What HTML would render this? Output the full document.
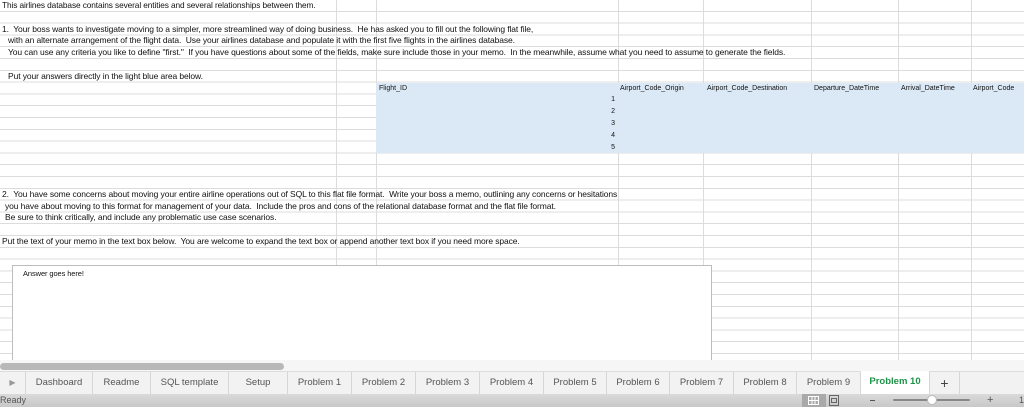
<!DOCTYPE html>
<html><head><meta charset="utf-8"><style>
*{margin:0;padding:0;box-sizing:border-box}
body{width:1024px;height:407px;overflow:hidden;background:#fff;font-family:"Liberation Sans",sans-serif;position:relative}
#grid{position:absolute;left:0;top:0;width:1024px;height:360px;
background-image:repeating-linear-gradient(to bottom,transparent 0,transparent 10.8px,#dcdcdc 10.8px,#dcdcdc 11.8px);}
.v{position:absolute;top:0;height:360px;width:1px;background:#dcdcdc}
.blue{position:absolute;left:376px;top:82.6px;width:648px;height:70.8px;background:#dbe9f6}
.t{position:absolute;font-size:8.5px;color:#111;white-space:nowrap;line-height:11.8px;letter-spacing:-0.1px}
.h{font-size:7px;letter-spacing:0}
.n{position:absolute;font-size:7px;color:#111;line-height:11.8px;left:605px;width:10px;text-align:right}
#box{position:absolute;left:12px;top:265px;width:700px;height:96px;background:#fff;border:1px solid #bdbdbd}
#scroll{position:absolute;left:0;top:360px;width:1024px;height:11px;background:#f6f6f6}
#thumb{position:absolute;left:0;top:363px;width:284px;height:7px;background:#b8b8b8;border-radius:4px}
#tabs{position:absolute;left:0;top:371px;width:1024px;height:23px;background:#f2f2f2;border-top:1px solid #ddd}
.tab{position:absolute;top:0;height:22px;font-size:9.5px;color:#555;line-height:22px;text-align:center;border-right:1px solid #d6d6d6}
#status{position:absolute;left:0;top:394px;width:1024px;height:13px;background:linear-gradient(#dadada,#c8c8c8);font-size:9px;color:#555}
</style></head><body>
<div id="grid"></div>
<div class="v" style="left:336px"></div>
<div class="v" style="left:376px"></div>
<div class="v" style="left:618px"></div>
<div class="v" style="left:703px"></div>
<div class="v" style="left:811px"></div>
<div class="v" style="left:898px"></div>
<div class="v" style="left:971px"></div>
<div class="blue"></div>
<div class="t" style="left:2px;top:0;font-size:8.3px">This airlines database contains several entities and several relationships between them.</div>
<div class="t" style="left:2px;top:23.6px">1.&nbsp; Your boss wants to investigate moving to a simpler, more streamlined way of doing business.&nbsp; He has asked you to fill out the following flat file,</div>
<div class="t" style="left:8px;top:35.4px">with an alternate arrangement of the flight data.&nbsp; Use your airlines database and populate it with the first five flights in the airlines database.</div>
<div class="t" style="left:8px;top:47.2px">You can use any criteria you like to define "first."&nbsp; If you have questions about some of the fields, make sure include those in your memo.&nbsp; In the meanwhile, assume what you need to assume to generate the fields.</div>
<div class="t" style="left:8px;top:70.8px">Put your answers directly in the light blue area below.</div>
<div class="t h" style="left:379px;top:82.6px">Flight_ID</div>
<div class="t h" style="left:620px;top:82.6px">Airport_Code_Origin</div>
<div class="t h" style="left:707px;top:82.6px">Airport_Code_Destination</div>
<div class="t h" style="left:814px;top:82.6px">Departure_DateTime</div>
<div class="t h" style="left:901px;top:82.6px">Arrival_DateTime</div>
<div class="t h" style="left:973px;top:82.6px">Airport_Code</div>
<div class="n" style="top:94.4px">1</div>
<div class="n" style="top:106.2px">2</div>
<div class="n" style="top:118px">3</div>
<div class="n" style="top:129.8px">4</div>
<div class="n" style="top:141.6px">5</div>
<div class="t" style="left:2px;top:188.8px">2.&nbsp; You have some concerns about moving your entire airline operations out of SQL to this flat file format.&nbsp; Write your boss a memo, outlining any concerns or hesitations</div>
<div class="t" style="left:5px;top:200.6px">you have about moving to this format for management of your data.&nbsp; Include the pros and cons of the relational database format and the flat file format.</div>
<div class="t" style="left:5px;top:212.4px">Be sure to think critically, and include any problematic use case scenarios.</div>
<div class="t" style="left:2px;top:236px">Put the text of your memo in the text box below.&nbsp; You are welcome to expand the text box or append another text box if you need more space.</div>
<div id="box"><div class="t" style="left:10px;top:2px;font-size:7.5px">Answer goes here!</div></div>
<div id="scroll"></div><div id="thumb"></div>
<div id="tabs">
<div class="tab" style="left:0;width:26px;color:#999;font-size:8px">&#9654;</div>
<div class="tab" style="left:26px;width:67px">Dashboard</div>
<div class="tab" style="left:93px;width:58px">Readme</div>
<div class="tab" style="left:151px;width:78px">SQL template</div>
<div class="tab" style="left:229px;width:59px">Setup</div>
<div class="tab" style="left:288px;width:64px">Problem 1</div>
<div class="tab" style="left:352px;width:64px">Problem 2</div>
<div class="tab" style="left:416px;width:64px">Problem 3</div>
<div class="tab" style="left:480px;width:64px">Problem 4</div>
<div class="tab" style="left:544px;width:63px">Problem 5</div>
<div class="tab" style="left:607px;width:63px">Problem 6</div>
<div class="tab" style="left:670px;width:64px">Problem 7</div>
<div class="tab" style="left:734px;width:63px">Problem 8</div>
<div class="tab" style="left:797px;width:64px">Problem 9</div>
<div class="tab" style="left:861px;width:69px;background:#fff;color:#1d9348;font-weight:bold;top:-1px;height:23px">Problem 10</div>
<div class="tab" style="left:930px;width:30px;font-size:14px;color:#444">+</div>
</div>
<div id="status">
<span style="position:absolute;left:0;top:1px">Ready</span>
<div style="position:absolute;left:802px;top:0;width:24px;height:13px;background:#a9a9a9"></div>
<svg style="position:absolute;left:808px;top:2px" width="11" height="9"><path d="M0 .5H11M0 4.5H11M0 8.5H11M.5 0V9M4 0V9M7 0V9M10.5 0V9" stroke="#fff" stroke-width="1"/></svg>
<svg style="position:absolute;left:829px;top:1px" width="10" height="11"><rect x=".5" y=".5" width="9" height="10" fill="none" stroke="#666"/><rect x="2.5" y="3.5" width="5" height="4" fill="none" stroke="#666"/></svg>
<div style="position:absolute;left:870px;top:6px;width:5px;height:1px;background:#555"></div>
<div style="position:absolute;left:893px;top:5px;width:77px;height:2px;background:#888;border-radius:1px"></div>
<div style="position:absolute;left:927px;top:1px;width:10px;height:10px;background:#fff;border-radius:50%;border:1px solid #bbb"></div>
<span style="position:absolute;left:987px;top:0;font-size:11px">+</span>
<span style="position:absolute;left:1019px;top:1px">1</span>
</div>
</body></html>
